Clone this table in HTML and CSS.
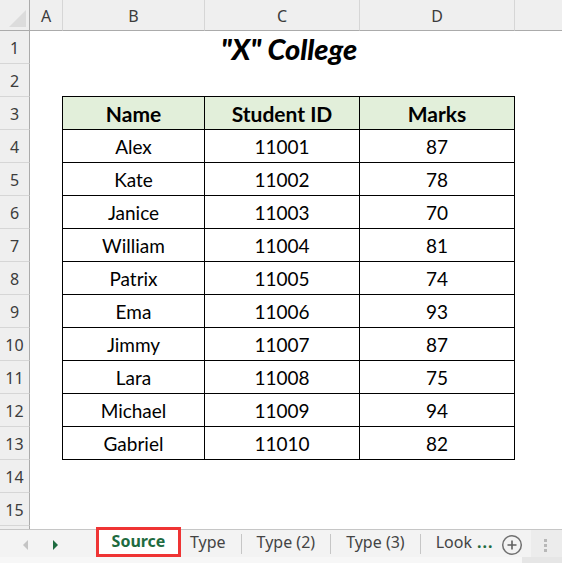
FILE: index.html
```html
<!DOCTYPE html>
<html>
<head>
<meta charset="utf-8">
<link rel="stylesheet" href="styles.css">
</head>
<body>
<div class="app">
  <div class="sheet">
    <div class="corner"><span class="corner-tri"></span></div>
    <div class="colhdr">A</div>
    <div class="colhdr">B</div>
    <div class="colhdr">C</div>
    <div class="colhdr">D</div>
    <div class="colhdr last"></div>

    <div class="rowhdr">1</div>
    <div class="rowhdr">2</div>
    <div class="rowhdr">3</div>
    <div class="rowhdr">4</div>
    <div class="rowhdr">5</div>
    <div class="rowhdr">6</div>
    <div class="rowhdr">7</div>
    <div class="rowhdr">8</div>
    <div class="rowhdr">9</div>
    <div class="rowhdr">10</div>
    <div class="rowhdr">11</div>
    <div class="rowhdr">12</div>
    <div class="rowhdr">13</div>
    <div class="rowhdr">14</div>
    <div class="rowhdr">15</div>
    <div class="rowhdr"></div>

    <div class="title">"X" College</div>

    <div class="datatable">
      <div class="cell head">Name</div>
      <div class="cell head">Student ID</div>
      <div class="cell head">Marks</div>
      <div class="cell">Alex</div><div class="cell">11001</div><div class="cell">87</div>
      <div class="cell">Kate</div><div class="cell">11002</div><div class="cell">78</div>
      <div class="cell">Janice</div><div class="cell">11003</div><div class="cell">70</div>
      <div class="cell">William</div><div class="cell">11004</div><div class="cell">81</div>
      <div class="cell">Patrix</div><div class="cell">11005</div><div class="cell">74</div>
      <div class="cell">Ema</div><div class="cell">11006</div><div class="cell">93</div>
      <div class="cell">Jimmy</div><div class="cell">11007</div><div class="cell">87</div>
      <div class="cell">Lara</div><div class="cell">11008</div><div class="cell">75</div>
      <div class="cell">Michael</div><div class="cell">11009</div><div class="cell">94</div>
      <div class="cell">Gabriel</div><div class="cell">11010</div><div class="cell">82</div>
    </div>
  </div>

  <div class="tabbar">
    <div class="navs">
      <svg class="nav" width="8" height="12" viewBox="0 0 8 12"><polygon points="6,1 1,6 6,11" fill="#c4c4c4"/></svg>
      <svg class="nav" width="8" height="12" viewBox="0 0 8 12"><polygon points="2,1 7,6 2,11" fill="#1e6b40"/></svg>
    </div>
    <div class="tab active">Source</div>
    <div class="tab first">Type</div>
    <div class="sep"></div>
    <div class="tab">Type (2)</div>
    <div class="sep"></div>
    <div class="tab">Type (3)</div>
    <div class="sep"></div>
    <div class="tab look">Look<span class="more">...</span></div>
    <svg class="add" width="22" height="22" viewBox="0 0 22 22"><circle cx="11" cy="11" r="9.3" fill="none" stroke="#707070" stroke-width="1.5"/><path d="M11 6.5v9M6.5 11h9" stroke="#606060" stroke-width="1.6"/></svg>
    <div class="grip"><span></span><span></span><span></span></div>
  </div>
  <div class="bottomstrip"><div class="scrollarea"></div></div>
</div>
</body>
</html>
```

FILE: styles.css
```css
html, body {
  margin: 0;
  padding: 0;
  background: #ffffff;
}
.app {
  width: 562px;
  height: 563px;
  overflow: hidden;
  display: flex;
  flex-direction: column;
}
.sheet {
  height: 529px;
  flex-shrink: 0;
  overflow: hidden;
  display: grid;
  grid-template-columns: 30px 33px 142px 155px 155px 47px;
  grid-template-rows: 31px repeat(16, 33px);
  font-family: "Lato", "Liberation Sans", sans-serif;
}
.corner {
  grid-row: 1;
  grid-column: 1;
  background: #efefef;
  border-right: 1px solid #ababab;
  border-bottom: 1px solid #ababab;
  position: relative;
}
.corner-tri {
  position: absolute;
  right: 3px;
  bottom: 3px;
  width: 0;
  height: 0;
  border-left: 17px solid transparent;
  border-bottom: 17px solid #dcdcdc;
}
.colhdr {
  grid-row: 1;
  background: #efefef;
  border-bottom: 1px solid #ababab;
  border-right: 1px solid #d6d6d6;
  font-family: "Noto Sans", "Open Sans", sans-serif;
  font-size: 16px;
  color: #3c3c3c;
  display: flex;
  align-items: center;
  justify-content: center;
  padding-top: 1px;
  box-sizing: border-box;
}
.colhdr.last { border-right: none; }
.rowhdr {
  grid-column: 1;
  background: #efefef;
  border-right: 1px solid #ababab;
  border-bottom: 1px solid #d6d6d6;
  font-family: "Noto Sans", "Open Sans", sans-serif;
  font-size: 16px;
  color: #3c3c3c;
  display: flex;
  align-items: center;
  justify-content: center;
  padding-top: 2px;
  box-sizing: border-box;
}
.title {
  grid-row: 2;
  grid-column: 3 / 6;
  display: flex;
  align-items: center;
  justify-content: center;
  font-weight: 900;
  font-style: italic;
  font-size: 29px;
  color: #000;
  padding-top: 1px;
}
.datatable {
  grid-row: 4 / 15;
  grid-column: 3 / 6;
  margin: -1px 0 0 -1px;
  display: grid;
  grid-template-columns: 142px 155px 155px;
  grid-template-rows: repeat(11, 33px);
  border-left: 1px solid #000;
  border-top: 1px solid #000;
}
.cell {
  border-right: 1px solid #000;
  border-bottom: 1px solid #000;
  display: flex;
  align-items: center;
  justify-content: center;
  font-size: 19px;
  color: #000;
  padding-top: 1px;
  box-sizing: border-box;
}
.cell.head {
  background: #e2efda;
  font-weight: 700;
  font-size: 21px;
}
.tabbar {
  height: 27px;
  flex-shrink: 0;
  border-top: 1px solid #c6c6c6;
  background: #f3f3f3;
  display: flex;
  align-items: center;
  font-family: "Noto Sans", "Open Sans", sans-serif;
  font-size: 16px;
  color: #444;
  white-space: nowrap;
}
.navs {
  width: 96px;
  flex-shrink: 0;
  display: flex;
  align-items: center;
  gap: 21px;
  padding-left: 22px;
  box-sizing: border-box;
  padding-top: 3px;
}
.tab {
  flex-shrink: 0;
  padding: 0 15px 4px 15px;
  height: 27px;
  display: flex;
  align-items: center;
  box-sizing: border-box;
}
.tab.first { padding-left: 9px; }
.tab.active {
  width: 85px;
  height: 30px;
  margin-top: -3px;
  justify-content: center;
  background: #ffffff;
  border: 3px solid #ef3434;
  color: #1e6b40;
  font-weight: 700;
  padding: 0 0 2px 0;
  align-self: flex-start;
}
.tab.look { padding-right: 6px; }
.more {
  color: #1e6b40;
  margin-left: 5px;
  font-weight: 700;
  letter-spacing: 1px;
}
.sep {
  flex-shrink: 0;
  width: 1px;
  height: 20px;
  background: #c6c6c6;
}
.add {
  flex-shrink: 0;
  margin-left: 2px;
  margin-top: 2px;
}
.grip {
  flex-shrink: 0;
  margin-left: 8px;
  width: 40px;
  align-self: stretch;
  background: #ececec;
  display: flex;
  flex-direction: column;
  align-items: flex-start;
  justify-content: center;
  gap: 2px;
  padding-left: 13px;
  padding-top: 3px;
  box-sizing: border-box;
}
.grip span {
  width: 3px;
  height: 3px;
  background: #b8b8b8;
}
.bottomstrip {
  flex: 1;
  background: #f7f7f7;
  display: flex;
  justify-content: flex-end;
}
.scrollarea {
  width: 40px;
  background: #e6e6e6;
}
```
